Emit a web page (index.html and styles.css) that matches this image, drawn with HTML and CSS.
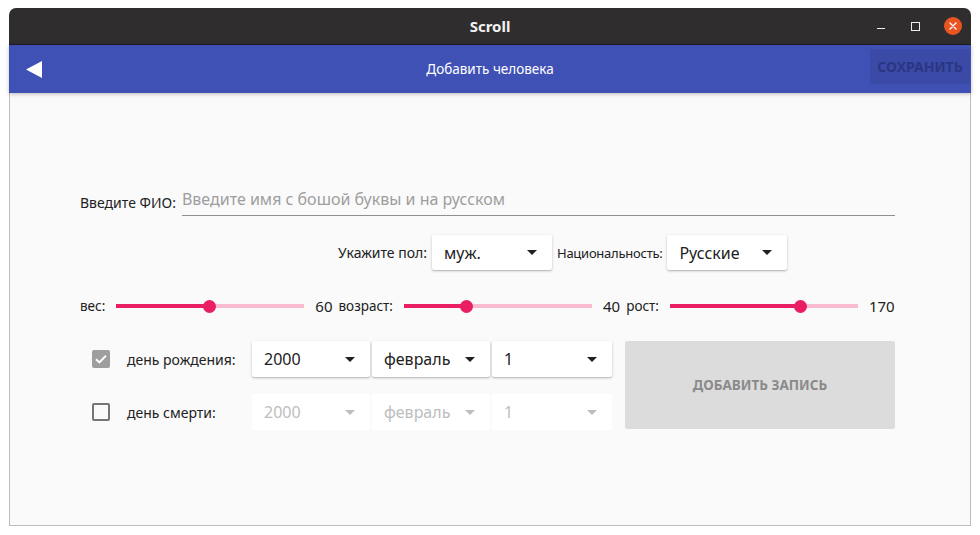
FILE: index.html
```html
<!DOCTYPE html>
<html lang="ru">
<head>
<meta charset="utf-8">
<title>Scroll</title>
<link rel="stylesheet" href="styles.css">
</head>
<body>
<div class="window">
  <div class="titlebar">
    <span class="title">Scroll</span>
    <div class="controls">
      <span class="ctl-min"></span>
      <span class="ctl-max"></span>
      <span class="ctl-close">
        <svg width="18" height="18" viewBox="0 0 18 18"><circle cx="9" cy="9" r="9" fill="#e95420"/><path d="M6 6L12 12M12 6L6 12" stroke="#fff" stroke-width="1.4" stroke-linecap="round"/></svg>
      </span>
    </div>
  </div>
  <div class="appbar">
    <div class="appbar-left">
      <span class="back">
        <svg width="16" height="17" viewBox="0 0 16 17"><path d="M16 0V17L0 8.5Z" fill="#fff"/></svg>
      </span>
    </div>
    <span class="appbar-title">Добавить человека</span>
    <div class="appbar-right">
      <span class="save">СОХРАНИТЬ</span>
    </div>
  </div>
  <div class="content">
    <div class="row-name">
      <span class="label">Введите ФИО:</span>
      <div class="text-input"><span class="placeholder">Введите имя с бошой буквы и на русском</span></div>
    </div>
    <div class="row-select">
      <span class="label">Укажите пол:</span>
      <div class="select raised w120"><span>муж.</span><i class="arrow"></i></div>
      <span class="label label-nat">Национальность:</span>
      <div class="select raised w120"><span>Русские</span><i class="arrow"></i></div>
    </div>
    <div class="row-sliders">
      <span class="label">вес:</span>
      <div class="slider"><div class="track-on" style="flex-basis:49.5%"></div><div class="thumb"></div><div class="track-off"></div></div>
      <span class="value">60</span>
      <span class="label">возраст:</span>
      <div class="slider"><div class="track-on" style="flex-basis:33%"></div><div class="thumb"></div><div class="track-off"></div></div>
      <span class="value">40</span>
      <span class="label">рост:</span>
      <div class="slider"><div class="track-on" style="flex-basis:69.5%"></div><div class="thumb"></div><div class="track-off"></div></div>
      <span class="value">170</span>
    </div>
    <div class="dates">
      <div class="date-rows">
        <div class="date-row">
          <span class="checkbox checked">
            <svg width="18" height="18" viewBox="0 0 18 18"><rect width="18" height="18" rx="2" fill="#9e9e9e"/><path d="M4 9.2L7.4 12.4L14 5.6" stroke="#fff" stroke-width="2" fill="none"/></svg>
          </span>
          <span class="label date-label">день рождения:</span>
          <div class="select raised w118"><span>2000</span><i class="arrow"></i></div>
          <div class="select raised w118"><span>февраль</span><i class="arrow"></i></div>
          <div class="select raised w120"><span>1</span><i class="arrow"></i></div>
        </div>
        <div class="date-row">
          <span class="checkbox"></span>
          <span class="label date-label">день смерти:</span>
          <div class="select disabled w118"><span>2000</span><i class="arrow"></i></div>
          <div class="select disabled w118"><span>февраль</span><i class="arrow"></i></div>
          <div class="select disabled w120"><span>1</span><i class="arrow"></i></div>
        </div>
      </div>
      <div class="add-btn">ДОБАВИТЬ ЗАПИСЬ</div>
    </div>
  </div>
</div>
</body>
</html>
```
FILE: styles.css
```css
html, body {
  margin: 0;
  padding: 0;
  background: #ffffff;
}
body {
  font-family: "Noto Sans", "Open Sans", sans-serif;
  color: #212121;
}
.window {
  margin: 8px 0 0 9px;
  width: 962px;
  height: 518px;
  display: flex;
  flex-direction: column;
}
.titlebar {
  height: 36px;
  background: #2f2d2d;
  border-radius: 7px 7px 0 0;
  border-bottom: 1px solid #1e1d1d;
  display: flex;
  align-items: center;
  justify-content: center;
  position: relative;
}
.title {
  color: #f2f2f2;
  font-weight: 700;
  font-size: 15px;
}
.controls {
  position: absolute;
  right: 9px;
  top: 9px;
  display: flex;
  align-items: center;
}
.ctl-min {
  width: 8px;
  height: 1px;
  background: #eee;
  margin-right: 26px;
  margin-top: 4px;
}
.ctl-max {
  width: 7px;
  height: 7px;
  border: 1px solid #eee;
  margin-right: 24px;
}
.ctl-close {
  display: flex;
}
.appbar {
  height: 48px;
  background: #3f51b5;
  display: grid;
  grid-template-columns: 1fr auto 1fr;
  align-items: center;
  position: relative;
  z-index: 1;
  box-shadow: 0 1px 4px rgba(0,0,0,0.25);
}
.appbar-left {
  display: flex;
}
.back {
  display: flex;
  margin-left: 17px;
}
.appbar-title {
  color: #ffffff;
  font-size: 13.5px;
}
.appbar-right {
  display: flex;
  justify-content: flex-end;
}
.save {
  width: 100px;
  height: 35px;
  margin-right: 1px;
  background: #3a4aa6;
  color: #2a3683;
  font-weight: 700;
  font-size: 14px;
  display: flex;
  align-items: center;
  justify-content: center;
  margin-top: -6px;
}
.content {
  flex: 1;
  background: #fafafa;
  border: 1px solid #bdbdbd;
  border-top: none;
  padding: 0 75px 0 70px;
}
.label {
  font-size: 14px;
  color: #212121;
  white-space: nowrap;
}
.label-nat {
  font-size: 13px;
  letter-spacing: -0.25px;
}
.row-name {
  margin-top: 93px;
  height: 30px;
  display: flex;
  align-items: flex-end;
}
.row-name .label {
  padding-bottom: 4px;
}
.text-input {
  flex: 1;
  margin-left: 6px;
  border-bottom: 1px solid #8f8f8f;
  height: 30px;
  display: flex;
  align-items: center;
}
.placeholder {
  font-size: 16px;
  color: #9e9e9e;
  margin-top: -3px;
}
.row-select {
  margin-top: 19px;
  margin-left: 258px;
  display: flex;
  align-items: center;
}
.row-select .select {
  margin-left: 5px;
  margin-right: 5px;
  height: 35px;
}
.select {
  height: 36px;
  background: #fff;
  border-radius: 2px;
  display: flex;
  align-items: center;
  padding: 0 12px;
  box-sizing: border-box;
  font-size: 16px;
  color: #212121;
}
.select span {
  flex: 1;
}
.select.raised {
  box-shadow: 0 1px 3px rgba(0,0,0,0.2), 0 1px 1px rgba(0,0,0,0.12);
}
.select.disabled {
  color: #bdbdbd;
}
.w120 { width: 120px; }
.w118 { width: 118px; }
.arrow {
  width: 0;
  height: 0;
  border-left: 5px solid transparent;
  border-right: 5px solid transparent;
  border-top: 5px solid #212121;
  margin-right: 3px;
}
.disabled .arrow {
  border-top-color: #bdbdbd;
}
.row-sliders {
  margin-top: 26px;
  height: 20px;
  display: flex;
  align-items: center;
}
.slider {
  flex-shrink: 0;
  width: 188px;
  height: 14px;
  display: flex;
  align-items: center;
  margin: 0 11px;
}
.track-on {
  height: 4px;
  background: #e91e63;
}
.track-off {
  flex: 1;
  height: 4px;
  background: #f8bbd0;
}
.thumb {
  width: 13px;
  height: 13px;
  border-radius: 50%;
  background: #e91e63;
  margin: 0 -6.5px;
  position: relative;
  z-index: 1;
}
.value {
  font-size: 15px;
  color: #212121;
  margin-right: 6px;
  white-space: nowrap;
}
.row-sliders .label {
  font-size: 13.5px;
}
.dates {
  margin-top: 25px;
  display: flex;
}
.date-rows {
  display: flex;
  flex-direction: column;
  gap: 17px;
}
.date-row {
  display: flex;
  align-items: center;
  gap: 2px;
}
.checkbox {
  width: 18px;
  height: 18px;
  box-sizing: border-box;
  margin-left: 12px;
  border: 2px solid #757575;
  border-radius: 2px;
  display: flex;
}
.checkbox.checked {
  border: none;
}
.date-label {
  width: 123px;
  margin-left: 15px;
}
.add-btn {
  flex: 1;
  margin-left: 13px;
  background: #dcdcdc;
  border-radius: 2px;
  display: flex;
  align-items: center;
  justify-content: center;
  font-size: 13.5px;
  font-weight: 700;
  color: #8a8a8a;
  height: 88px;
}
```
